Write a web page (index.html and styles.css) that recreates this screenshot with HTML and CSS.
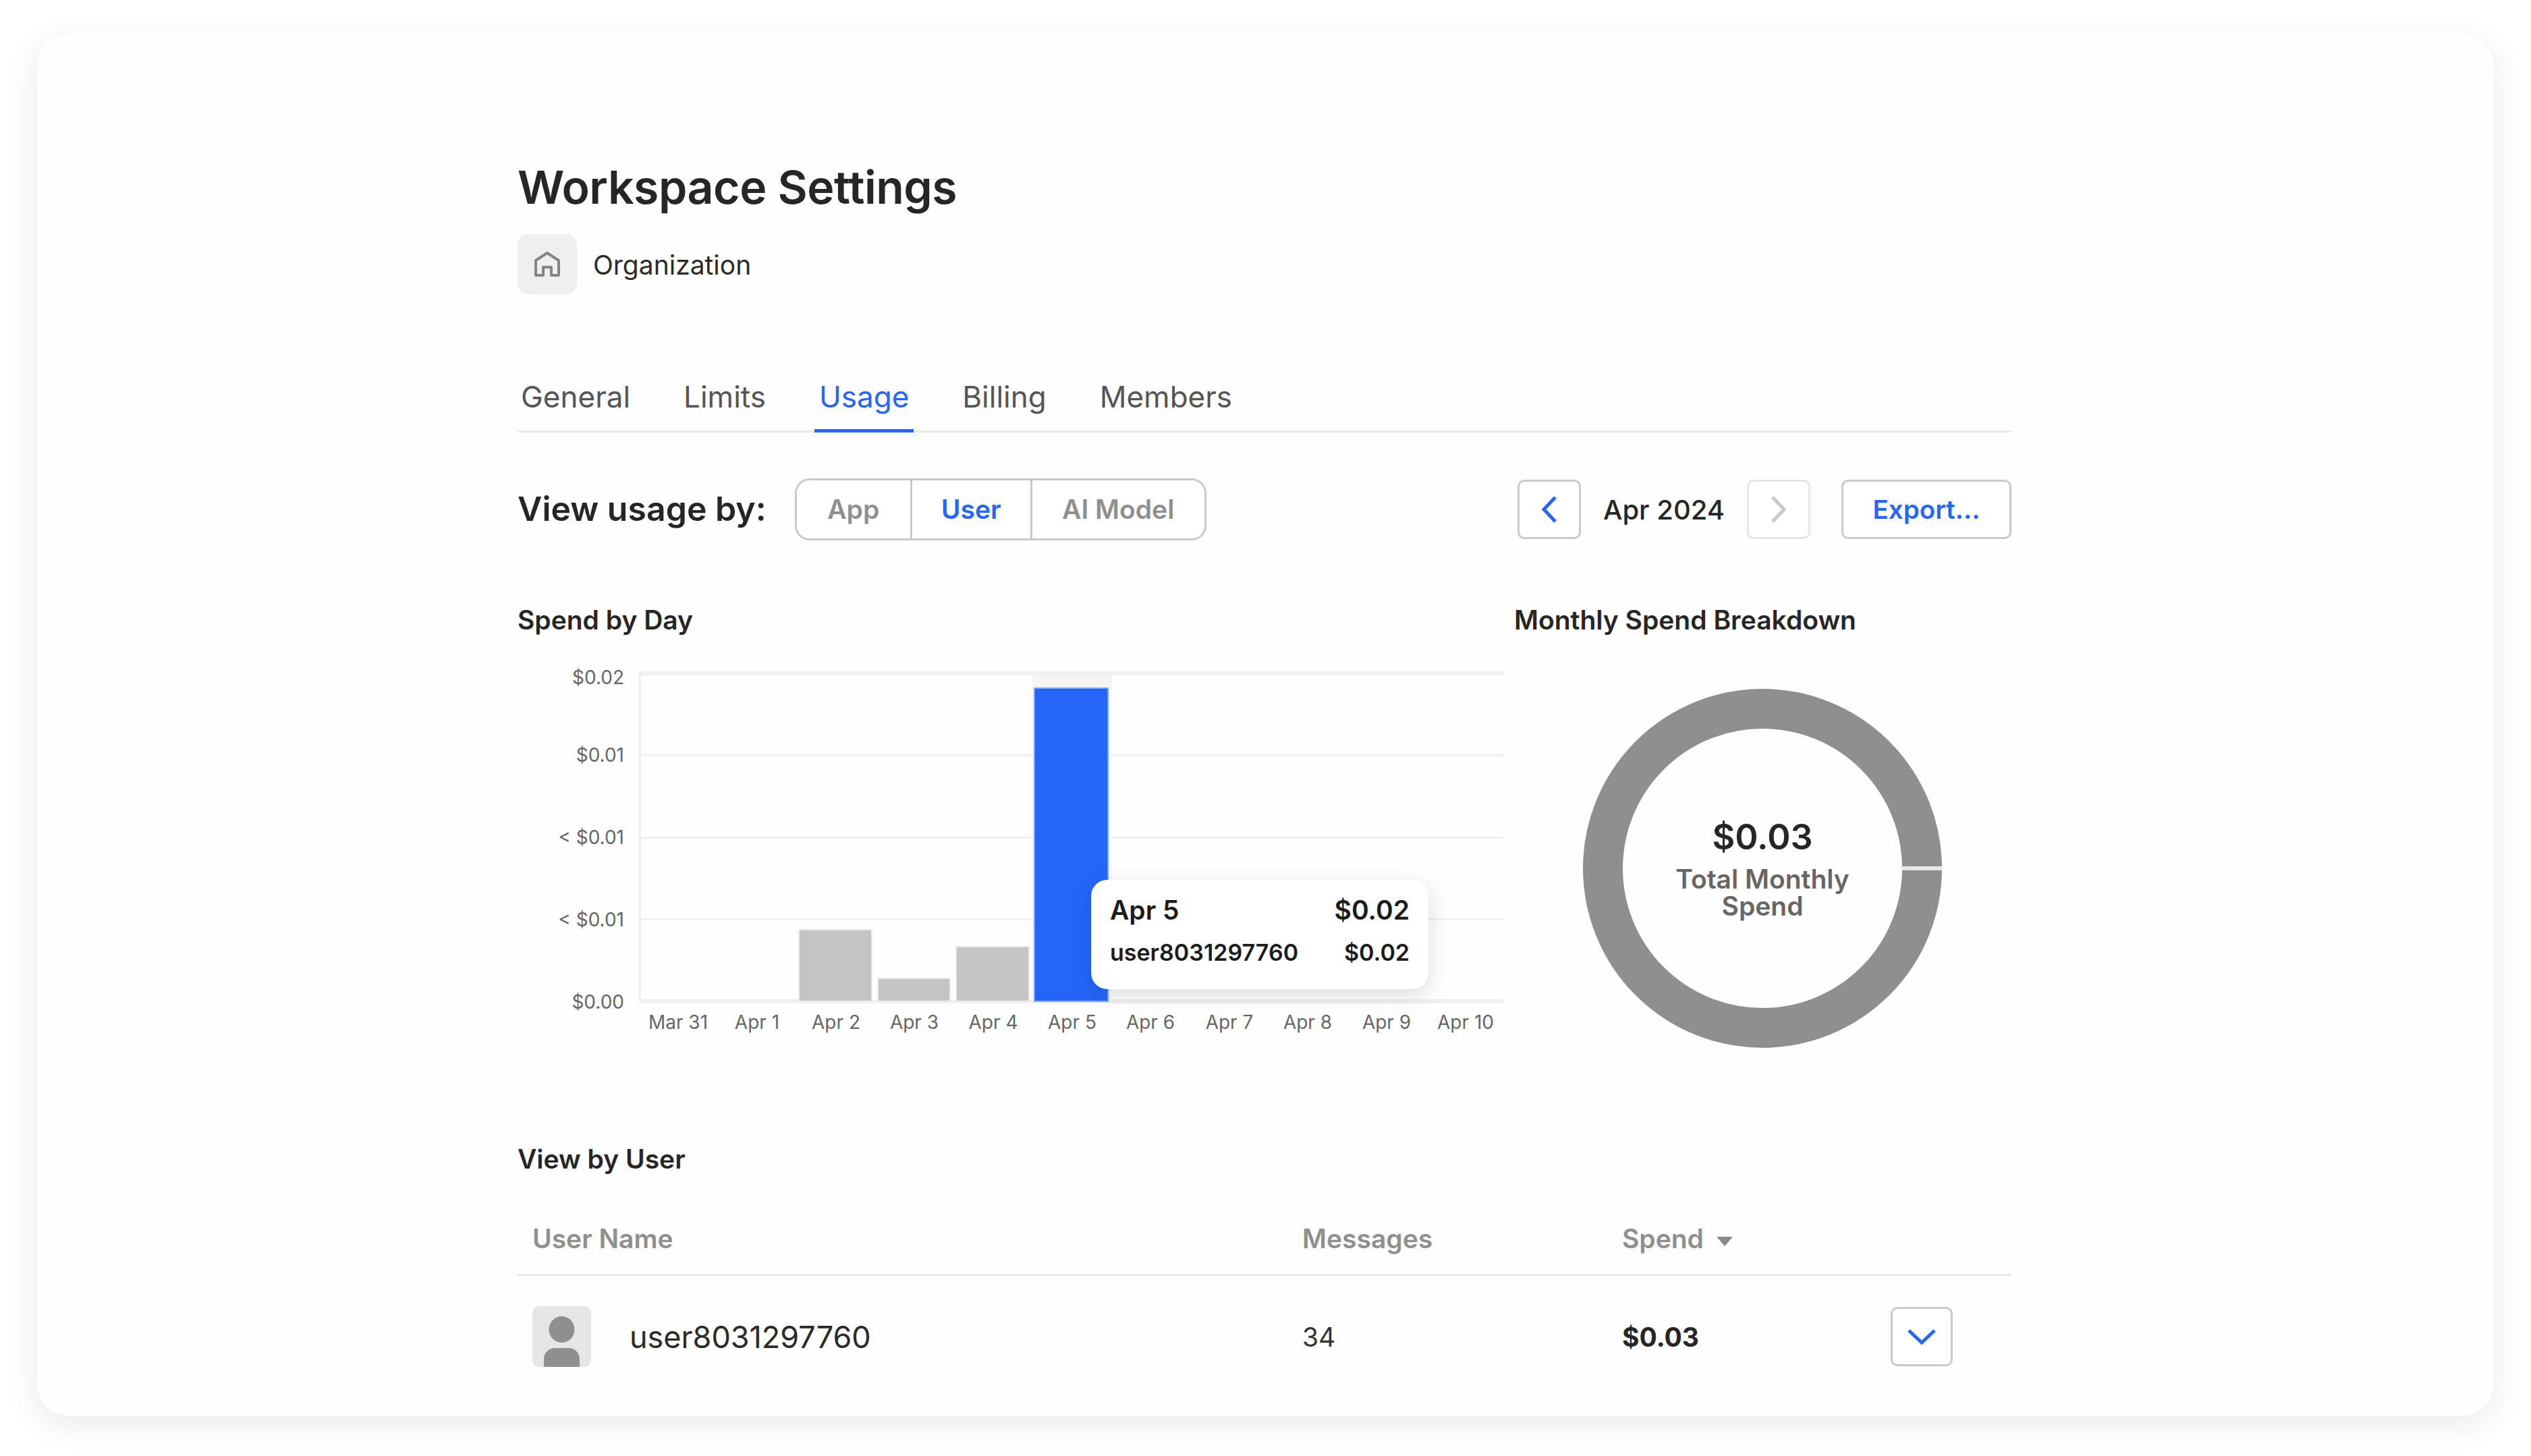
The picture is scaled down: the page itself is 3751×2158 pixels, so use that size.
FILE: index.html
```html
<!DOCTYPE html>
<html lang="en">
<head>
<meta charset="utf-8">
<title>Workspace Settings</title>
<link rel="stylesheet" href="styles.css">
</head>
<body>
<main class="card">
  <h1 class="title">Workspace Settings</h1>
  <div class="org">
    <span class="org-icon">
      <svg width="40" height="38" viewBox="0 0 40 38" fill="none" stroke="#858585" stroke-width="4" stroke-linejoin="round"><path d="M3 35V13L20 2l17 11v22H26V23H14v12z"/></svg>
    </span>
    <span class="org-name">Organization</span>
  </div>
  <nav class="tabs">
    <a class="tab">General</a>
    <a class="tab">Limits</a>
    <a class="tab tab-active">Usage</a>
    <a class="tab">Billing</a>
    <a class="tab">Members</a>
  </nav>
  <section class="toolbar">
    <span class="view-label">View usage by:</span>
    <div class="segments">
      <span class="segment seg-app">App</span>
      <span class="segment seg-user">User</span>
      <span class="segment seg-model">AI Model</span>
    </div>
    <div class="spacer"></div>
    <button class="icon-btn">
      <svg width="26" height="40" viewBox="0 0 26 40" fill="none" stroke="#2566f9" stroke-width="5"><path d="M22 2 5 20l17 18"/></svg>
    </button>
    <span class="month">Apr 2024</span>
    <button class="icon-btn icon-btn-off">
      <svg width="26" height="40" viewBox="0 0 26 40" fill="none" stroke="#c9c9c9" stroke-width="5"><path d="m4 2 17 18L4 38"/></svg>
    </button>
    <button class="export">Export...</button>
  </section>
  <section class="charts">
    <div class="chart-left">
      <h2 class="section-title">Spend by Day</h2>
      <svg class="bar-chart" width="1478" height="647" viewBox="767 943 1478 647">
        <rect x="947" y="995" width="3" height="492" fill="#f0f0f0"/>
        <g fill="#f0f0f0">
          <rect x="947" y="995" width="1283" height="6"/>
          <rect x="950" y="1118" width="1280" height="3"/>
          <rect x="950" y="1240" width="1280" height="3"/>
          <rect x="950" y="1361" width="1280" height="3"/>
          <rect x="947" y="1481" width="1283" height="6"/>
        </g>
        <rect x="1530" y="1001" width="118" height="480" fill="#f9f9f9"/>
        <rect x="1530" y="1001" width="118" height="19" fill="#f5f5f5"/>
        <g fill="#c4c4c4" stroke="#ececec" stroke-width="2">
          <rect x="1184" y="1378" width="108" height="106"/>
          <rect x="1301" y="1450" width="107" height="34"/>
          <rect x="1417" y="1403" width="108" height="81"/>
        </g>
        <rect x="1533" y="1020" width="109" height="464" fill="#2566f9" stroke="#7ba3fb" stroke-width="2"/>
        <g class="y-tick" text-anchor="end">
          <text x="925" y="1014">$0.02</text>
          <text x="925" y="1129">$0.01</text>
          <text x="925" y="1251">&lt; $0.01</text>
          <text x="925" y="1373">&lt; $0.01</text>
          <text x="925" y="1495">$0.00</text>
        </g>
        <g class="x-tick" text-anchor="middle">
          <text x="1005" y="1525">Mar 31</text>
          <text x="1122" y="1525">Apr 1</text>
          <text x="1239" y="1525">Apr 2</text>
          <text x="1355" y="1525">Apr 3</text>
          <text x="1472" y="1525">Apr 4</text>
          <text x="1589" y="1525">Apr 5</text>
          <text x="1705" y="1525">Apr 6</text>
          <text x="1822" y="1525">Apr 7</text>
          <text x="1938" y="1525">Apr 8</text>
          <text x="2055" y="1525">Apr 9</text>
          <text x="2172" y="1525">Apr 10</text>
        </g>
      </svg>
      <div class="tooltip">
        <div class="tip-row tip-head"><span>Apr 5</span><span>$0.02</span></div>
        <div class="tip-row tip-body"><span>user8031297760</span><span>$0.02</span></div>
      </div>
    </div>
    <div class="chart-right">
      <h2 class="section-title">Monthly Spend Breakdown</h2>
      <div class="donut">
        <svg width="532" height="532" viewBox="0 0 532 532">
          <circle cx="266" cy="266" r="236.5" fill="none" stroke="#8f8f8f" stroke-width="59"/>
          <rect x="472" y="263" width="60" height="6" fill="#e8e8e8"/>
        </svg>
        <div class="donut-center">
          <div class="donut-value">$0.03</div>
          <div class="donut-label">Total Monthly<br>Spend</div>
        </div>
      </div>
    </div>
  </section>
  <section class="users">
    <h2 class="section-title">View by User</h2>
    <div class="table-row table-head">
      <span class="col-name">User Name</span>
      <span class="col-msgs">Messages</span>
      <span class="col-spend">Spend <i class="caret"></i></span>
    </div>
    <div class="table-row table-body">
      <span class="col-name user-cell">
        <span class="avatar">
          <svg width="87" height="90" viewBox="0 0 87 90" fill="#8f8f8f"><ellipse cx="43.5" cy="34.5" rx="19" ry="19.5"/><path d="M17 90V78a16 16 0 0 1 16-16h21a16 16 0 0 1 16 16v12z"/></svg>
        </span>
        <span class="user-name">user8031297760</span>
      </span>
      <span class="col-msgs msgs-value">34</span>
      <span class="col-spend spend-value">$0.03</span>
      <button class="expand">
        <svg width="42" height="24" viewBox="0 0 42 24" fill="none" stroke="#2566f9" stroke-width="5"><path d="m2 3 19 18L40 3"/></svg>
      </button>
    </div>
  </section>
</main>
</body>
</html>
```
FILE: styles.css
```css
* { box-sizing: border-box; }
html, body { margin: 0; padding: 0; }
body {
  width: 3751px;
  height: 2158px;
  overflow: hidden;
  background: #fff;
  font-family: Inter, "Liberation Sans", sans-serif;
  color: #222;
}
.card {
  margin: 50px 0 0 55px;
  width: 3641px;
  height: 2049px;
  padding: 182px 715px 0 712px;
  background: #fefefe;
  border-radius: 48px;
  box-shadow: 0 12px 50px rgba(0, 0, 0, .09);
}
.title {
  margin: 0;
  height: 90px;
  line-height: 90px;
  font-size: 68px;
  font-weight: 600;
  letter-spacing: -.5px;
  color: #262626;
}
.org {
  display: flex;
  align-items: center;
  gap: 24px;
  margin-top: 25px;
}
.org-icon {
  display: flex;
  align-items: center;
  justify-content: center;
  width: 88px;
  height: 89px;
  border-radius: 16px;
  background: #efefef;
}
.org-name { font-size: 39px; color: #2a2a2a; padding-top: 2px; }
.tabs {
  display: flex;
  gap: 79px;
  margin-top: 100px;
  height: 105px;
  padding-left: 5px;
  border-bottom: 3px solid #e8e8e8;
}
.tab {
  height: 105px;
  padding-top: 24px;
  font-size: 44px;
  line-height: 56px;
  color: #555;
}
.tab-active {
  position: relative;
  color: #2566f9;
}
.tab-active::after {
  content: "";
  position: absolute;
  left: -7px;
  right: -7px;
  bottom: 0;
  height: 5px;
  background: #2566f9;
}
.toolbar {
  display: flex;
  align-items: center;
  height: 92px;
  margin-top: 68px;
}
.view-label { font-size: 50px; font-weight: 600; color: #262626; padding-bottom: 2px; }
.segments {
  display: flex;
  height: 92px;
  margin-left: 42px;
  border: 3px solid #c9c9c9;
  border-radius: 22px;
  overflow: hidden;
  font-size: 39px;
  font-weight: 600;
}
.segment {
  display: flex;
  align-items: center;
  justify-content: center;
  padding-bottom: 2px;
  color: #8f8f8f;
  background: #fff;
}
.seg-app { width: 168px; }
.seg-user {
  width: 181px;
  color: #2566f9;
  background: #fff;
  border-left: 3px solid #c9c9c9;
  border-right: 3px solid #c9c9c9;
}
.seg-model { width: 255px; }
.spacer { flex: 1; }
button {
  font-family: inherit;
  padding: 0;
  background: #fff;
  cursor: pointer;
}
.icon-btn {
  display: flex;
  align-items: center;
  justify-content: center;
  width: 94px;
  height: 88px;
  border: 3px solid #c9c9c9;
  border-radius: 10px;
}
.icon-btn-off { border-color: #e6e6e6; }
.month {
  width: 246px;
  text-align: center;
  font-size: 40px;
  font-weight: 500;
  color: #262626;
}
.export {
  width: 252px;
  height: 88px;
  margin-left: 46px;
  border: 3px solid #c9c9c9;
  border-radius: 10px;
  font-size: 38.5px;
  font-weight: 600;
  color: #2566f9;
}
.charts {
  display: flex;
  margin-top: 94px;
  height: 695px;
}
.chart-left { position: relative; width: 1478px; }
.chart-right { width: 736px; margin-left: -1px; }
.section-title {
  margin: 0;
  height: 48px;
  line-height: 48px;
  font-size: 39px;
  font-weight: 600;
  color: #262626;
}
.bar-chart { display: block; }
.y-tick, .x-tick { font-size: 28px; fill: #666; }
.tooltip {
  position: absolute;
  left: 850px;
  top: 409px;
  width: 500px;
  height: 162px;
  padding: 20px 28px 0;
  border-radius: 24px;
  background: #fff;
  box-shadow: 0 8px 30px rgba(0, 0, 0, .14);
}
.tip-row {
  display: flex;
  justify-content: space-between;
}
.tip-head { font-size: 39px; font-weight: 600; line-height: 50px; color: #1c1c1c; }
.tip-body { font-size: 34px; font-weight: 600; line-height: 44px; margin-top: 16px; color: #1c1c1c; }
.donut {
  position: relative;
  width: 532px;
  height: 532px;
  margin: 78px auto 0;
}
.donut svg { display: block; }
.donut-center {
  position: absolute;
  left: 59px;
  right: 59px;
  top: 188px;
  text-align: center;
}
.donut-value { font-size: 52px; font-weight: 600; line-height: 64px; color: #262626; }
.donut-label { font-size: 39px; font-weight: 600; line-height: 40px; margin-top: 10px; color: #666; }
.users { margin-top: 104px; }
.table-row { display: flex; align-items: center; }
.table-head {
  height: 149px;
  padding-top: 40px;
  border-bottom: 3px solid #e8e8e8;
  font-size: 39px;
  font-weight: 600;
  color: #8f8f8f;
}
.col-name { width: 1141px; margin-left: 22px; flex: none; }
.col-msgs { width: 474px; flex: none; }
.col-spend { width: 398px; flex: none; }
.caret {
  display: inline-block;
  width: 0;
  height: 0;
  margin-left: 9px;
  vertical-align: 3px;
  border-left: 12px solid transparent;
  border-right: 12px solid transparent;
  border-top: 14px solid #8a8a8a;
}
.table-body { height: 90px; margin-top: 45px; font-size: 39px; }
.user-cell { display: flex; align-items: center; gap: 57px; }
.avatar {
  display: block;
  width: 87px;
  height: 90px;
  border-radius: 10px;
  background: #e6e6e6;
  overflow: hidden;
}
.avatar svg { display: block; }
.user-name { font-size: 45px; color: #2a2a2a; }
.msgs-value { color: #333; }
.spend-value { font-weight: 700; color: #262626; }
.expand {
  display: flex;
  align-items: center;
  justify-content: center;
  width: 92px;
  height: 88px;
  border: 3px solid #c9c9c9;
  border-radius: 10px;
}
```
